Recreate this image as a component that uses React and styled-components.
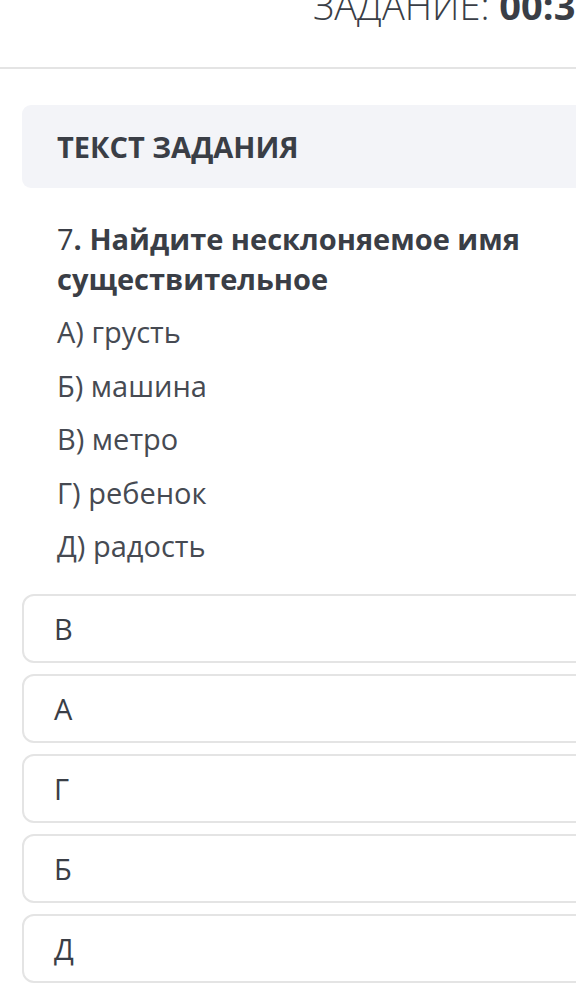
import React from "react";
import styled, { createGlobalStyle } from "styled-components";

const GlobalStyle = createGlobalStyle`
  html, body {
    margin: 0;
    padding: 0;
    background: #ffffff;
    overflow-x: hidden;
  }
  body {
    font-family: "Open Sans", "Noto Sans", sans-serif;
    color: #3a3e46;
  }
`;

const options = [
  { letter: "А", word: "грусть" },
  { letter: "Б", word: "машина" },
  { letter: "В", word: "метро" },
  { letter: "Г", word: "ребенок" },
  { letter: "Д", word: "радость" },
];

const answers = ["В", "А", "Г", "Б", "Д"];

const App = () => {
  return (
    <>
      <GlobalStyle />
      <Page>
        <Header>
          <Timer>
            ЗАДАНИЕ: <TimerValue>00:35</TimerValue>
          </Timer>
        </Header>

        <Body>
          <TitleCard>
            <TitleText>ТЕКСТ ЗАДАНИЯ</TitleText>
          </TitleCard>

          <Question>
            <QuestionNumber>7</QuestionNumber>. Найдите несклоняемое имя
            существительное
          </Question>

          <OptionList>
            {options.map((each) => (
              <Option key={each.letter}>
                {each.letter}) {each.word}
              </Option>
            ))}
          </OptionList>

          <AnswerList>
            {answers.map((each) => (
              <AnswerBox key={each}>{each}</AnswerBox>
            ))}
          </AnswerList>
        </Body>
      </Page>
    </>
  );
};

const Page = styled.div`
  width: 100%;
  min-height: 1006px;
  overflow: hidden;
`;

const Header = styled.div`
  height: 67px;
  border-bottom: 2px solid #e4e4e4;
  overflow: hidden;
  white-space: nowrap;
  padding-left: 313px;
`;

const Timer = styled.div`
  font-size: 38px;
  font-weight: 300;
  line-height: 38px;
  margin-top: -14px;
  color: #3a3e46;
`;

const TimerValue = styled.span`
  font-weight: 700;
`;

const Body = styled.div`
  padding: 36px 0 0 22px;
  margin-right: -40px;
`;

const TitleCard = styled.div`
  background: #f3f4f8;
  border-radius: 9px;
  height: 83px;
  display: flex;
  align-items: center;
  padding-left: 35px;
`;

const TitleText = styled.h2`
  margin: 0;
  font-size: 29px;
  font-weight: 700;
  color: #3a3e46;
`;

const Question = styled.p`
  margin: 31px 0 0 0;
  padding-left: 35px;
  padding-right: 80px;
  font-size: 29px;
  line-height: 40px;
  font-weight: 700;
  color: #3a3e46;
`;

const QuestionNumber = styled.span`
  font-weight: 400;
`;

const OptionList = styled.div`
  display: flex;
  flex-direction: column;
  margin-top: 6px;
  padding-left: 35px;
`;

const Option = styled.div`
  font-size: 29px;
  line-height: 53.5px;
  font-weight: 400;
  color: #464a52;
`;

const AnswerList = styled.div`
  display: flex;
  flex-direction: column;
  gap: 11px;
  margin-top: 21px;
`;

const AnswerBox = styled.div`
  height: 65px;
  border: 2px solid #e4e4e4;
  border-radius: 12px;
  display: flex;
  align-items: center;
  padding-left: 30px;
  font-size: 29px;
  color: #3a3e46;
`;

export default App;
